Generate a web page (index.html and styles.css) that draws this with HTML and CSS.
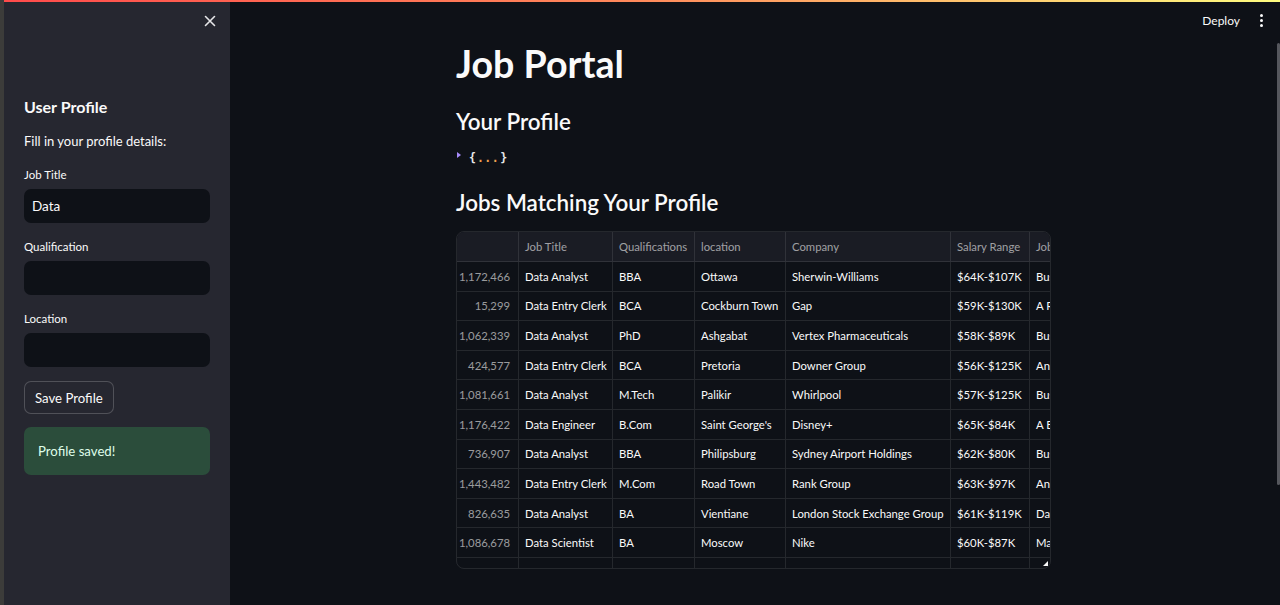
FILE: index.html
```html
<!DOCTYPE html>
<html lang="en">
<head>
<meta charset="utf-8">
<title>Job Portal</title>
<link rel="stylesheet" href="styles.css">
</head>
<body>
<div class="edge"></div>
<div class="window">
  <div class="decor"></div>
  <div class="shell">
    <aside class="sidebar">
      <div class="sb-top">
        <button class="close" aria-label="Close sidebar">
          <svg width="12" height="12" viewBox="0 0 12 12"><path d="M1.5 1.5 L10.5 10.5 M10.5 1.5 L1.5 10.5" stroke="#e6e6e8" stroke-width="1.6" stroke-linecap="round"/></svg>
        </button>
      </div>
      <h2 class="sb-title">User Profile</h2>
      <p class="sb-desc">Fill in your profile details:</p>
      <div class="field">
        <label class="field-label">Job Title</label>
        <div class="input">Data</div>
      </div>
      <div class="field">
        <label class="field-label">Qualification</label>
        <div class="input"></div>
      </div>
      <div class="field">
        <label class="field-label">Location</label>
        <div class="input"></div>
      </div>
      <button class="btn">Save Profile</button>
      <div class="success">Profile saved!</div>
    </aside>
    <main class="main">
      <header class="header">
        <span class="deploy">Deploy</span>
        <span class="kebab"><i></i><i></i><i></i></span>
      </header>
      <div class="content">
        <h1 class="title">Job Portal</h1>
        <h2 class="subtitle">Your Profile</h2>
        <div class="json"><span class="caret"></span><span class="brace">{</span><span class="dots">...</span><span class="brace">}</span></div>
        <h2 class="subtitle second">Jobs Matching Your Profile</h2>
        <div class="grid">
          <div class="row head">
            <div class="c idx"></div><div class="c c1">Job Title</div><div class="c c2">Qualifications</div><div class="c c3">location</div><div class="c c4">Company</div><div class="c c5">Salary Range</div><div class="c c6">Job Description</div>
          </div>
          <div class="row"><div class="c idx">1,172,466</div><div class="c c1">Data Analyst</div><div class="c c2">BBA</div><div class="c c3">Ottawa</div><div class="c c4">Sherwin-Williams</div><div class="c c5">$64K-$107K</div><div class="c c6">Business</div></div>
          <div class="row"><div class="c idx">15,299</div><div class="c c1">Data Entry Clerk</div><div class="c c2">BCA</div><div class="c c3">Cockburn Town</div><div class="c c4">Gap</div><div class="c c5">$59K-$130K</div><div class="c c6">A Records</div></div>
          <div class="row"><div class="c idx">1,062,339</div><div class="c c1">Data Analyst</div><div class="c c2">PhD</div><div class="c c3">Ashgabat</div><div class="c c4">Vertex Pharmaceuticals</div><div class="c c5">$58K-$89K</div><div class="c c6">Business</div></div>
          <div class="row"><div class="c idx">424,577</div><div class="c c1">Data Entry Clerk</div><div class="c c2">BCA</div><div class="c c3">Pretoria</div><div class="c c4">Downer Group</div><div class="c c5">$56K-$125K</div><div class="c c6">An</div></div>
          <div class="row"><div class="c idx">1,081,661</div><div class="c c1">Data Analyst</div><div class="c c2">M.Tech</div><div class="c c3">Palikir</div><div class="c c4">Whirlpool</div><div class="c c5">$57K-$125K</div><div class="c c6">Business</div></div>
          <div class="row"><div class="c idx">1,176,422</div><div class="c c1">Data Engineer</div><div class="c c2">B.Com</div><div class="c c3">Saint George's</div><div class="c c4">Disney+</div><div class="c c5">$65K-$84K</div><div class="c c6">A Big</div></div>
          <div class="row"><div class="c idx">736,907</div><div class="c c1">Data Analyst</div><div class="c c2">BBA</div><div class="c c3">Philipsburg</div><div class="c c4">Sydney Airport Holdings</div><div class="c c5">$62K-$80K</div><div class="c c6">Business</div></div>
          <div class="row"><div class="c idx">1,443,482</div><div class="c c1">Data Entry Clerk</div><div class="c c2">M.Com</div><div class="c c3">Road Town</div><div class="c c4">Rank Group</div><div class="c c5">$63K-$97K</div><div class="c c6">An</div></div>
          <div class="row"><div class="c idx">826,635</div><div class="c c1">Data Analyst</div><div class="c c2">BA</div><div class="c c3">Vientiane</div><div class="c c4">London Stock Exchange Group</div><div class="c c5">$61K-$119K</div><div class="c c6">Data</div></div>
          <div class="row"><div class="c idx">1,086,678</div><div class="c c1">Data Scientist</div><div class="c c2">BA</div><div class="c c3">Moscow</div><div class="c c4">Nike</div><div class="c c5">$60K-$87K</div><div class="c c6">Machine</div></div>
          <div class="row"><div class="c idx"></div><div class="c c1"></div><div class="c c2"></div><div class="c c3"></div><div class="c c4"></div><div class="c c5"></div><div class="c c6"></div></div>
          <span class="resize"></span>
        </div>
      </div>
      <div class="scroll-thumb"></div>
    </main>
  </div>
</div>
</body>
</html>
```

FILE: styles.css
```css
* { box-sizing: border-box; }
html, body { margin: 0; padding: 0; height: 100%; }
body {
  display: flex;
  background: #0e1117;
  color: #fafafa;
  font-family: "Lato", "Noto Sans", sans-serif;
  overflow: hidden;
}
.edge { width: 4px; background: #3c3c3a; flex: none; }
.window { flex: 1; display: flex; flex-direction: column; min-width: 0; }
.decor {
  height: 2px;
  flex: none;
  background: linear-gradient(90deg, #ff4b4b 0%, #ff8a5b 50%, #fffd80 100%);
}
.shell { flex: 1; display: flex; min-height: 0; }

/* Sidebar */
.sidebar {
  width: 226px;
  flex: none;
  background: #262730;
  padding: 0 20px;
  display: flex;
  flex-direction: column;
}
.sb-top { height: 38px; display: flex; justify-content: flex-end; align-items: center; }
.close {
  background: none; border: 0; padding: 0; margin-right: -6px;
  width: 12px; height: 12px; display: flex;
}
.sb-title {
  margin: 55px 0 0;
  font-size: 16px;
  line-height: 24px;
  font-weight: 700;
}
.sb-desc { margin: 12px 0 0; font-size: 13px; line-height: 20px; }
.field { margin-top: 16px; display: flex; flex-direction: column; }
.field-label { font-size: 11.5px; line-height: 16px; margin-bottom: 6px; }
.field:first-of-type .field-label { padding-top: 1px; margin-bottom: 5px; }
.input {
  height: 34px;
  background: #0e1117;
  border-radius: 7px;
  padding: 0 8px;
  font-size: 13.5px;
  line-height: 34px;
}
.btn {
  align-self: flex-start;
  margin-top: 14px;
  height: 33px;
  padding: 0 10px;
  background: #262730;
  color: #fafafa;
  border: 1px solid rgba(250, 250, 250, 0.2);
  border-radius: 7px;
  font-family: inherit;
  font-size: 13.2px;
}
.success {
  margin-top: 13px;
  height: 48px;
  background: #2b4d3b;
  border-radius: 7px;
  padding: 0 14px;
  font-size: 13.2px;
  line-height: 48px;
  color: #dffde9;
}

/* Main */
.main { flex: 1; position: relative; display: flex; flex-direction: column; padding-right: 3px; min-width: 0; }
.header {
  height: 36px;
  display: flex;
  justify-content: flex-end;
  align-items: center;
  padding-right: 14px;
  gap: 20px;
}
.deploy { font-size: 12px; color: #fafafa; }
.kebab { display: flex; flex-direction: column; gap: 2px; }
.kebab i { width: 3px; height: 3px; border-radius: 50%; background: #fafafa; display: block; }
.content { width: 595px; margin: 0 auto; }
.title { margin: 4px 0 0; font-size: 37.6px; line-height: 44px; font-weight: 700; }
.subtitle { margin: 21px 0 0; font-size: 22.4px; line-height: 30px; font-weight: 600; }
.subtitle.second { margin-top: 21px; }
.json {
  margin-top: 12px;
  height: 18px;
  display: flex;
  align-items: center;
  font-family: "DejaVu Sans Mono", monospace;
  font-size: 11.5px;
  font-weight: 700;
}
.caret {
  width: 0; height: 0;
  border-left: 4px solid #a78bfa;
  border-top: 3px solid transparent;
  border-bottom: 3px solid transparent;
  margin: 0 8px 0 1px;
  transform: translateY(-3px);
}
.brace { color: #e8e8ea; }
.dots { color: #f0a050; letter-spacing: 0.5px; padding: 0 1px; }

.grid {
  position: relative;
  margin-top: 13px;
  height: 338px;
  border: 1px solid rgba(250, 250, 250, 0.1);
  border-radius: 8px;
  overflow: hidden;
  font-size: 11.3px;
}
.row {
  display: flex;
  height: 29.6px;
  border-bottom: 1px solid rgba(250, 250, 250, 0.1);
  white-space: nowrap;
}
.row.head { height: 30px; background: #1a1c24; color: rgba(250, 250, 250, 0.6); }
.c {
  flex: none;
  padding: 0 6px;
  display: flex;
  align-items: center;
  border-right: 1px solid rgba(250, 250, 250, 0.1);
  overflow: hidden;
}
.idx { width: 62px; justify-content: flex-end; padding-right: 8px; color: rgba(250, 250, 250, 0.6); }
.c1 { width: 94px; }
.c2 { width: 82px; }
.c3 { width: 91px; }
.c4 { width: 165px; }
.c5 { width: 79px; }
.c6 { width: 300px; border-right: 0; }
.resize {
  position: absolute;
  right: 2px;
  bottom: 2px;
  width: 0; height: 0;
  border-left: 5px solid transparent;
  border-bottom: 5px solid #fafafa;
}
.scroll-thumb {
  position: absolute;
  right: 0;
  top: 41px;
  width: 3px;
  height: 442px;
  background: #55575d;
  border-radius: 2px;
}
```
